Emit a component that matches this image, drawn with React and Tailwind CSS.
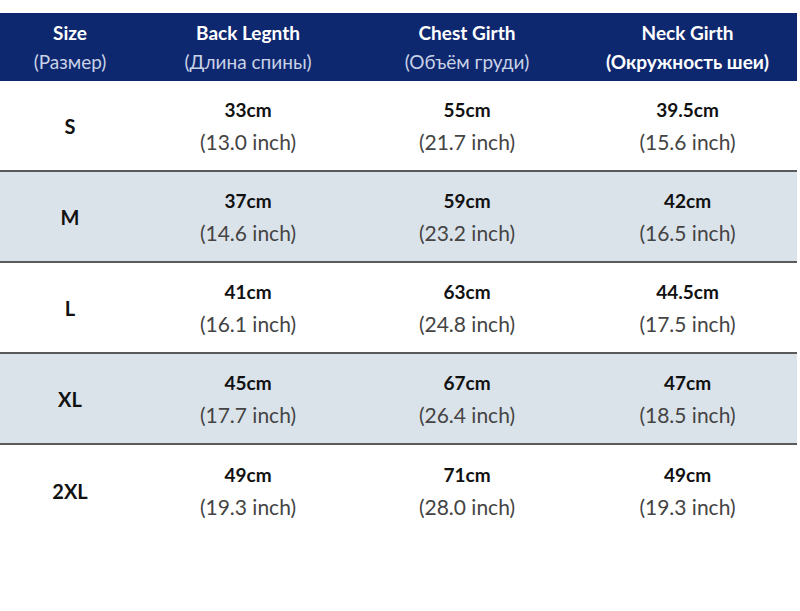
const cols = ['w-[140px]', 'w-[216px]', 'w-[222px]', 'w-[219px]'];

const headers = [
  ['Size', '(Размер)', false],
  ['Back Legnth', '(Длина спины)', false],
  ['Chest Girth', '(Объём груди)', false],
  ['Neck Girth', '(Окружность шеи)', true],
];

const rows = [
  ['S', ['33cm', '13.0'], ['55cm', '21.7'], ['39.5cm', '15.6']],
  ['M', ['37cm', '14.6'], ['59cm', '23.2'], ['42cm', '16.5']],
  ['L', ['41cm', '16.1'], ['63cm', '24.8'], ['44.5cm', '17.5']],
  ['XL', ['45cm', '17.7'], ['67cm', '26.4'], ['47cm', '18.5']],
  ['2XL', ['49cm', '19.3'], ['71cm', '28.0'], ['49cm', '19.3']],
];

const App = () => {
  return (
    <div className="w-[800px] h-[611px] bg-white pt-[13px] font-['Lato','Open_Sans',sans-serif]">
      <div className="w-[797px] h-[68px] bg-[#0e286f] flex">
        {headers.map(([en, ru, bold], i) => (
          <div key={en} className={`${cols[i]} flex flex-col items-center justify-center`}>
            <div className="text-white font-bold text-[19px] leading-[29px]">{en}</div>
            <div className={`text-[19px] leading-[30px] ${bold ? 'text-white font-bold text-[19.5px]' : 'text-[#c9d2e6]'}`}>{ru}</div>
          </div>
        ))}
      </div>

      {rows.map(([size, ...vals], r) => (
        <div
          key={size}
          className={`w-[797px] flex ${r % 2 === 1 ? 'bg-[#dbe3ea]' : 'bg-white'} ${r < rows.length - 1 ? 'h-[91px] border-b-2 border-[#5a5a5a]' : 'h-[91px]'}`}
        >
          <div className={`${cols[0]} flex items-center justify-center text-[20px] font-bold text-[#111]`}>{size}</div>
          {vals.map(([cm, inch], i) => (
            <div key={i} className={`${cols[i + 1]} flex flex-col items-center justify-center pt-[2px]`}>
              <div className="text-[19px] font-bold text-[#111] leading-[30px]">{cm}</div>
              <div className="text-[21px] text-[#444] leading-[34px]">({inch} inch)</div>
            </div>
          ))}
        </div>
      ))}
    </div>
  );
};

export default App;
